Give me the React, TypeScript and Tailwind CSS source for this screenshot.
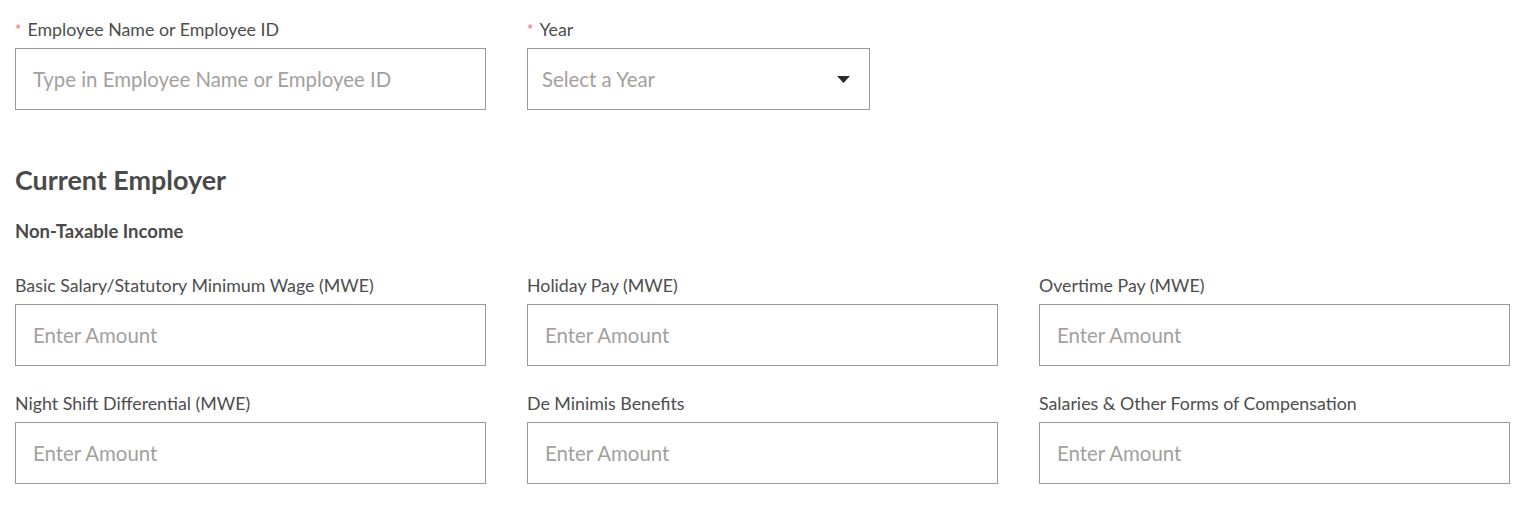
import React from "react";

const font = { fontFamily: "Lato, 'Open Sans', sans-serif" };

function Field({ label, required, placeholder, width = "w-[471px]" }: { label: string; required?: boolean; placeholder: string; width?: string }) {
  return (
    <div className={`flex flex-col ${width}`}>
      <div className="h-[22px] leading-[22px] text-[17.8px] text-[#4d4d4d] mb-[8px] whitespace-nowrap">
        {required && <span className="text-[#f06a5e] text-[15px] mr-[6px] align-top">*</span>}
        {label}
      </div>
      <div className="h-[62px] border border-[#9a9a9a] flex items-center px-[17px]">
        <span className="text-[20.4px] text-[#a3a09d] whitespace-nowrap">{placeholder}</span>
      </div>
    </div>
  );
}

export default function App() {
  return (
    <div className="bg-white w-[1539px] h-[510px] pl-[15px] pt-[18px]" style={font}>
      <div className="flex gap-[41px]">
        <Field label="Employee Name or Employee ID" required placeholder="Type in Employee Name or Employee ID" />
        <div className="flex flex-col w-[343px]">
          <div className="h-[22px] leading-[22px] text-[17.8px] text-[#4d4d4d] mb-[8px] whitespace-nowrap">
            <span className="text-[#f06a5e] text-[15px] mr-[6px] align-top">*</span>
            Year
          </div>
          <div className="h-[62px] border border-[#9a9a9a] flex items-center justify-between pl-[14px] pr-[19px]">
            <span className="text-[20.4px] text-[#a3a09d] whitespace-nowrap">Select a Year</span>
            <svg width="13" height="7" viewBox="0 0 13 7">
              <polygon points="0,0 13,0 6.5,7" fill="#2b2b2b" />
            </svg>
          </div>
        </div>
      </div>

      <h2 className="mt-[54px] h-[32px] leading-[32px] text-[26.9px] font-bold text-[#4a4a4a]">Current Employer</h2>
      <div className="mt-[23px] h-[24px] leading-[24px] text-[18.5px] font-bold text-[#4a4a4a]">Non-Taxable Income</div>

      <div className="mt-[31px] grid grid-cols-[471px_471px_471px] gap-x-[41px] gap-y-[26px]">
        <Field label="Basic Salary/Statutory Minimum Wage (MWE)" placeholder="Enter Amount" />
        <Field label="Holiday Pay (MWE)" placeholder="Enter Amount" />
        <Field label="Overtime Pay (MWE)" placeholder="Enter Amount" />
        <Field label="Night Shift Differential (MWE)" placeholder="Enter Amount" />
        <Field label="De Minimis Benefits" placeholder="Enter Amount" />
        <Field label="Salaries & Other Forms of Compensation" placeholder="Enter Amount" />
      </div>
    </div>
  );
}
